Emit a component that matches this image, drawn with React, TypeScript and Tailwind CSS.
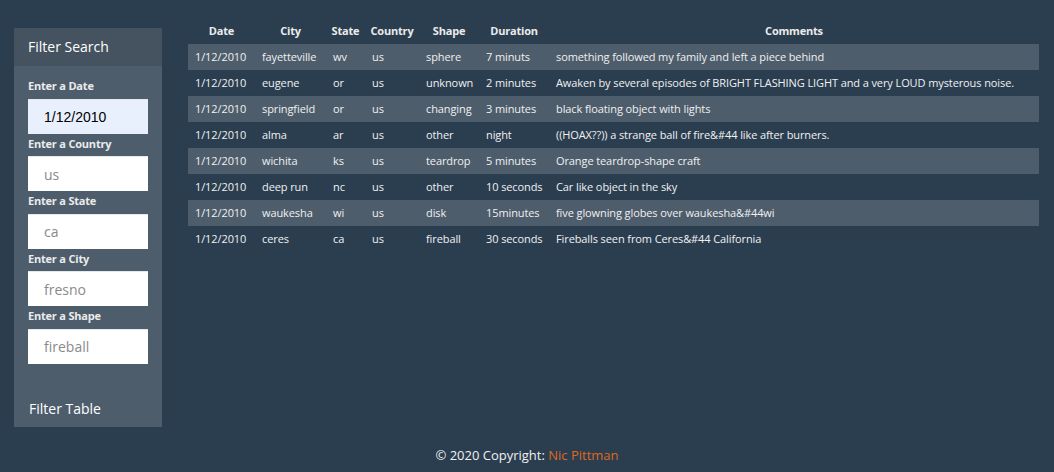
const rows = [
  ["1/12/2010", "fayetteville", "wv", "us", "sphere", "7 minuts", "something followed my family and left a piece behind"],
  ["1/12/2010", "eugene", "or", "us", "unknown", "2 minutes", "Awaken by several episodes of BRIGHT FLASHING LIGHT and a very LOUD mysterous noise."],
  ["1/12/2010", "springfield", "or", "us", "changing", "3 minutes", "black floating object with lights"],
  ["1/12/2010", "alma", "ar", "us", "other", "night", "((HOAX??)) a strange ball of fire&#44 like after burners."],
  ["1/12/2010", "wichita", "ks", "us", "teardrop", "5 minutes", "Orange teardrop-shape craft"],
  ["1/12/2010", "deep run", "nc", "us", "other", "10 seconds", "Car like object in the sky"],
  ["1/12/2010", "waukesha", "wi", "us", "disk", "15minutes", "five glowning globes over waukesha&#44wi"],
  ["1/12/2010", "ceres", "ca", "us", "fireball", "30 seconds", "Fireballs seen from Ceres&#44 California"],
];

const headers = ["Date", "City", "State", "Country", "Shape", "Duration", "Comments"];
const widths = ["w-[67px]", "w-[71px]", "w-[39px]", "w-[54px]", "w-[60px]", "w-[70px]", ""];

const filters = [
  { label: "Enter a Date", value: "1/12/2010" },
  { label: "Enter a Country", placeholder: "us" },
  { label: "Enter a State", placeholder: "ca" },
  { label: "Enter a City", placeholder: "fresno" },
  { label: "Enter a Shape", placeholder: "fireball" },
];

function Sidebar() {
  return (
    <aside className="w-[148px] h-[399px] bg-[#4e5d6c] flex flex-col shrink-0">
      <div className="h-[38px] bg-[#45525f] flex items-center pl-[14px] pb-[2px] text-[14px] text-white">
        Filter Search
      </div>
      <div className="flex flex-col px-[14px] pt-[10px]">
        {filters.map((f) => (
          <div key={f.label} className="flex flex-col">
            <label className="text-[11px] font-bold text-[#ebebeb] leading-[19.5px] mb-[3px] tracking-[-0.2px]">
              {f.label}
            </label>
            <input
              readOnly
              defaultValue={f.value}
              placeholder={f.placeholder}
              className={`h-[35px] w-[120px] pl-[16px] text-[14px] outline-none border-t border-[#e5e9ee] ${
                f.value ? "bg-[#e8f0fe] text-black font-['Liberation_Sans',sans-serif]" : "bg-white placeholder:text-[#8a8a8a]"
              }`}
            />
          </div>
        ))}
      </div>
      <div className="mt-auto pl-[15px] pb-[8px] text-[14px] text-white">Filter Table</div>
    </aside>
  );
}

export default function App() {
  return (
    <div className="w-[1054px] h-[472px] bg-[#2b3e50] text-white font-['Open_Sans',sans-serif] flex flex-col">
      <div className="flex gap-[26px] pl-[14px] pr-[15px]">
        <div className="pt-[28px]">
          <Sidebar />
        </div>
        <div className="flex-1 pt-[22px]">
          <table className="w-full table-fixed border-collapse text-[11px]">
            <colgroup>
              {widths.map((w, i) => (
                <col key={i} className={w} />
              ))}
            </colgroup>
            <thead>
              <tr className="h-[22px]">
                {headers.map((h) => (
                  <th key={h} className="font-bold text-center text-[#ebebeb] tracking-[-0.2px] pb-[4px]">
                    {h}
                  </th>
                ))}
              </tr>
            </thead>
            <tbody>
              {rows.map((r, i) => (
                <tr key={i} className={`h-[26px] ${i % 2 === 0 ? "bg-[#4e5d6c]" : ""}`}>
                  {r.map((c, j) => (
                    <td key={j} className="pl-[7px] whitespace-nowrap text-[#f0f0f0] tracking-[-0.1px]">
                      {c}
                    </td>
                  ))}
                </tr>
              ))}
            </tbody>
          </table>
        </div>
      </div>
      <footer className="mt-auto pb-[7px] text-center text-[13px] text-[#f0f0f0]">
        © 2020 Copyright: <span className="text-[#df691a]">Nic Pittman</span>
      </footer>
    </div>
  );
}
